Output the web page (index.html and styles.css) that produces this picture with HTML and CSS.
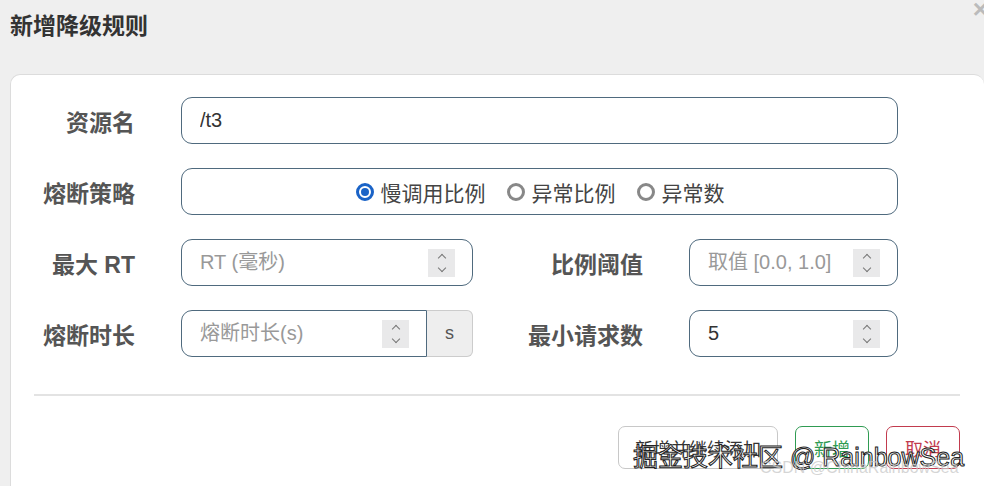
FILE: index.html
```html
<!DOCTYPE html>
<html lang="zh-CN">
<head>
    <meta charset="UTF-8">
    <title>新增降级规则</title>
    <link rel="stylesheet" href="styles.css">
</head>
<body>
    <div class="dialog">
        <div class="dialog-header">
            <h3>新增降级规则</h3>
            <span class="close">&times;</span>
        </div>

        <div class="card">
            <div class="form-grid">
                <label class="form-label">资源名</label>
                <div class="field wide">
                    <input type="text" value="/t3">
                </div>

                <label class="form-label">熔断策略</label>
                <div class="field wide radio-field">
                    <span class="radio"><span class="dot checked"></span>慢调用比例</span>
                    <span class="radio"><span class="dot"></span>异常比例</span>
                    <span class="radio"><span class="dot"></span>异常数</span>
                </div>

                <label class="form-label">最大 RT</label>
                <div class="field">
                    <input type="text" placeholder="RT (毫秒)">
                    <span class="spinner"><i class="up"></i><i class="down"></i></span>
                </div>
                <label class="form-label">比例阈值</label>
                <div class="field">
                    <input type="text" placeholder="取值 [0.0, 1.0]">
                    <span class="spinner"><i class="up"></i><i class="down"></i></span>
                </div>

                <label class="form-label">熔断时长</label>
                <div class="input-group">
                    <div class="field grouped">
                        <input type="text" placeholder="熔断时长(s)">
                        <span class="spinner"><i class="up"></i><i class="down"></i></span>
                    </div>
                    <span class="addon">s</span>
                </div>
                <label class="form-label">最小请求数</label>
                <div class="field">
                    <input type="text" value="5">
                    <span class="spinner"><i class="up"></i><i class="down"></i></span>
                </div>
            </div>

            <hr class="divider">

            <div class="actions">
                <button class="btn">新增并继续添加</button>
                <button class="btn btn-success">新增</button>
                <button class="btn btn-danger">取消</button>
            </div>
        </div>

        <div class="watermark">掘金技术社区 @ RainbowSea</div>
        <div class="watermark-sub">CSDN @ChinaRainbowSea</div>
    </div>
</body>
</html>
```

FILE: styles.css
```css
body {
    margin: 0;
    background: #efefef;
    font-family: "Liberation Sans", "Noto Sans CJK SC", sans-serif;
    height: 486px;
    overflow: hidden;
}

.dialog {
    position: relative;
    height: 486px;
    overflow: hidden;
}

.dialog-header {
    position: relative;
    height: 74px;
}

.dialog-header h3 {
    margin: 0;
    padding: 12px 0 0 10px;
    font-size: 23px;
    font-weight: bold;
    color: #333;
    line-height: 28px;
}

.close {
    position: absolute;
    top: -6px;
    right: -4px;
    font-size: 26px;
    color: #bbb;
    font-weight: bold;
}

.card {
    margin-left: 10px;
    background: #fff;
    border: 1px solid #dcdcdc;
    border-right: none;
    border-radius: 10px 10px 0 0;
    padding: 22px 24px 0 23px;
    height: 480px;
    box-sizing: border-box;
}

.form-grid {
    display: grid;
    grid-template-columns: 101px 292px 124px 209px;
    grid-auto-rows: 47px;
    column-gap: 46px;
    row-gap: 24px;
    align-items: center;
}

.form-label {
    text-align: right;
    font-size: 23px;
    font-weight: bold;
    color: #555;
    white-space: nowrap;
}

.field {
    display: flex;
    align-items: center;
    height: 47px;
    min-width: 0;
    border: 1px solid #4f6a7e;
    border-radius: 11px;
    box-sizing: border-box;
    padding: 0 17px 0 18px;
}

.field.wide {
    grid-column: 2 / 5;
}

.field input {
    flex: 1;
    width: 0;
    min-width: 0;
    border: none;
    outline: none;
    background: transparent;
    font-family: inherit;
    font-size: 20px;
    color: #333;
    padding: 0;
}

.field input::placeholder {
    color: #999;
}

.spinner {
    flex: none;
    width: 27px;
    height: 28px;
    background: #e9e9ea;
    display: flex;
    flex-direction: column;
    align-items: center;
    justify-content: center;
    gap: 4px;
}

.spinner i {
    width: 5px;
    height: 5px;
    border-left: 1.5px solid #777;
    border-top: 1.5px solid #777;
    display: block;
}

.spinner .up {
    transform: rotate(45deg);
    margin-top: 3px;
}

.spinner .down {
    transform: rotate(225deg);
    margin-bottom: 3px;
}

.radio-field {
    justify-content: center;
    gap: 21px;
    font-size: 21px;
    color: #444;
}

.radio {
    display: flex;
    align-items: center;
    gap: 7px;
}

.dot {
    width: 18px;
    height: 18px;
    border: 3px solid #888;
    border-radius: 50%;
    box-sizing: border-box;
    position: relative;
}

.dot.checked {
    border-color: #1a63c7;
}

.dot.checked::after {
    content: "";
    position: absolute;
    left: 2px;
    top: 2px;
    width: 8px;
    height: 8px;
    border-radius: 50%;
    background: #1a63c7;
}

.input-group {
    display: flex;
    width: 100%;
    height: 47px;
}

.field.grouped {
    flex: 1;
    border-radius: 11px 0 0 11px;
}

.addon {
    flex: none;
    width: 46px;
    background: #eee;
    border: 1px solid #ccc;
    border-left: none;
    border-radius: 0 6px 6px 0;
    box-sizing: border-box;
    display: flex;
    align-items: center;
    justify-content: center;
    font-size: 18px;
    color: #555;
}

.divider {
    border: none;
    border-top: 2px solid #e3e3e3;
    margin: 37px 0 0 0;
}

.actions {
    display: flex;
    justify-content: flex-end;
    gap: 17px;
    margin-top: 30px;
}

.btn {
    height: 43px;
    padding: 0 16px;
    background: #fff;
    border: 1px solid #c8c8c8;
    border-radius: 7px;
    font-family: inherit;
    font-size: 18px;
    color: #333;
}

.btn-success {
    border-color: #2f9b52;
    color: #2f9b52;
    width: 74px;
}

.btn-danger {
    border-color: #c23b4e;
    color: #c23b4e;
    width: 74px;
}

.watermark {
    position: absolute;
    left: 633px;
    top: 437px;
    font-size: 25px;
    color: #fff;
    -webkit-text-stroke: 1px #222;
    white-space: nowrap;
}

.watermark-sub {
    position: absolute;
    left: 760px;
    top: 459px;
    font-size: 16px;
    color: rgba(200, 200, 200, 0.75);
    white-space: nowrap;
}
```
